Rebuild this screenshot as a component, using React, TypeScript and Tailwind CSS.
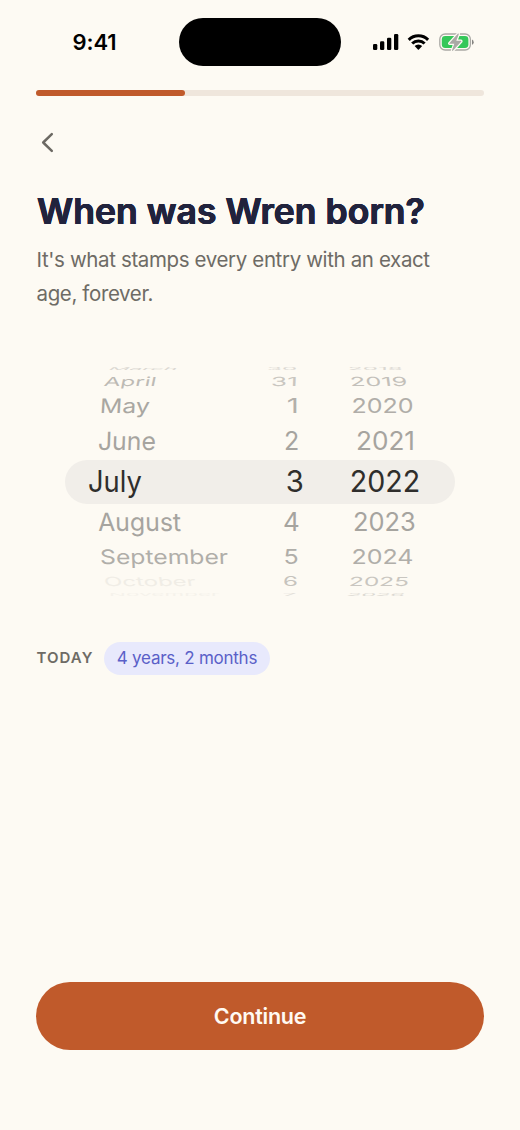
import { useLayoutEffect, useRef, useState } from "react";

type Entry = { text: string; left: number; width: number; tone: string; skew?: number };
type Row = { height: number; size: number; squash: number; cells: [Entry, Entry, Entry] };

const e = (text: string, left: number, width: number, tone: string, skew = 0): Entry => ({ text, left, width, tone, skew });

const rows: Row[] = [
  { height: 10, size: 25, squash: 0.15, cells: [e("March", 110, 67, "text-[#dbd8d2]", -12), e("30", 268, 28, "text-[#dbd8d2]"), e("2018", 349, 53, "text-[#dbd8d2]")] },
  { height: 16, size: 25, squash: 0.5, cells: [e("April", 104.5, 50, "text-[#bdbab5]", -6), e("31", 272, 25, "text-[#c9c6c0]", -1), e("2019", 351, 55.5, "text-[#c3c0ba]", 4)] },
  { height: 33, size: 25, squash: 0.8, cells: [e("May", 101, 47.5, "text-[#a9a7a2]", -3), e("1", 287.5, 9.5, "text-[#b3b0ab]"), e("2020", 352.5, 60, "text-[#b0ada8]")] },
  { height: 37, size: 25, squash: 1, cells: [e("June", 98.5, 55.5, "text-[#a6a49f]", -2), e("2", 285, 13, "text-[#a6a49f]"), e("2021", 356.5, 56.5, "text-[#a6a49f]")] },
  { height: 44, size: 29.5, squash: 1, cells: [e("July", 89, 51.5, "text-[#2f2e2c]"), e("3", 286.5, 15.5, "text-[#2f2e2c]"), e("2022", 350.5, 68.5, "text-[#2f2e2c]")] },
  { height: 37, size: 25, squash: 1, cells: [e("August", 99, 81.5, "text-[#a6a49f]", 1), e("4", 284, 14.5, "text-[#a6a49f]"), e("2023", 354, 61, "text-[#a6a49f]")] },
  { height: 33, size: 25, squash: 0.8, cells: [e("September", 101, 126.5, "text-[#b0aea9]", 2), e("5", 284.5, 13, "text-[#b0aea9]"), e("2024", 352.5, 60, "text-[#b0aea9]")] },
  { height: 16, size: 25, squash: 0.5, cells: [e("October", 105, 90, "text-[#f0ede6]", 5), e("6", 283.5, 13.5, "text-[#c6c3bd]"), e("2025", 350, 57.5, "text-[#c9c6c0]", -3)] },
  { height: 10, size: 25, squash: 0.15, cells: [e("November", 110, 109, "text-[#f5f2eb]"), e("7", 283.5, 12, "text-[#e3e0d9]"), e("2026", 348, 56, "text-[#dbd8d1]", -8)] },
];

const columnStarts = [65, 245, 335];

function WheelText({ entry, row, start }: { entry: Entry; row: Row; start: number }) {
  const ref = useRef<HTMLSpanElement>(null);
  const [stretch, setStretch] = useState(1);
  const bearing = row.size * 0.04;
  useLayoutEffect(() => {
    if (ref.current) setStretch(entry.width / (ref.current.offsetWidth - bearing * 2));
  }, [entry.width, bearing]);
  return (
    <div className="flex h-full min-h-0 min-w-0 items-center" style={{ paddingLeft: entry.left - start }}>
      <span
        ref={ref}
        className={`inline-block origin-left whitespace-nowrap font-normal leading-none ${entry.tone}`}
        style={{
          fontSize: row.size,
          transform: `translate(${-bearing * stretch}px, -0.5px) scale(${stretch}, ${row.squash}) skewX(${entry.skew ?? 0}deg)`,
        }}
      >
        {entry.text}
      </span>
    </div>
  );
}

function StatusBar() {
  return (
    <header className="flex h-[66px] items-start pt-[18px]">
      <div className="flex h-12 w-[179px] items-center pl-[72.5px] text-[22px] font-semibold tracking-[-0.1px] text-black">9:41</div>
      <div className="h-12 w-[162px] rounded-full bg-black" />
      <svg className="ml-[32px] mt-[16px]" width="26" height="17" viewBox="0 0 26 17">
        <rect x="0" y="10" width="4.3" height="6" rx="1.3" />
        <rect x="7" y="7.2" width="4.3" height="8.8" rx="1.3" />
        <rect x="14" y="3.8" width="4.3" height="12.2" rx="1.3" />
        <rect x="21" y="0" width="4.3" height="16" rx="1.3" />
      </svg>
      <svg className="ml-[8px] mt-[16px]" width="23" height="17" viewBox="0 0 23 17">
        <g fill="none" stroke="#000" strokeWidth="3">
          <path d="M1.7 5.9 A13.7 13.7 0 0 1 21.1 5.9" />
          <path d="M5.2 9.5 A8.7 8.7 0 0 1 17.6 9.5" />
        </g>
        <path d="M7.6 12 A5.4 5.4 0 0 1 15.2 12 L11.9 15.4 Q11.4 15.9 10.9 15.4 Z" />
      </svg>
      <svg className="ml-[9px] mt-[15px]" width="37" height="19" viewBox="0 0 37 19">
        <rect x="0.8" y="1" width="30.6" height="16" rx="5.3" fill="none" stroke="#aaa9a5" strokeWidth="1.3" />
        <rect x="2.8" y="3" width="26.6" height="12" rx="3.4" fill="#34c759" />
        <path d="M33 6.6 Q34.7 7.2 34.7 9.2 Q34.7 11.2 33 11.8 Z" fill="#858481" />
        <path d="M19 0.5 L10.3 10.2 Q10 10.8 10.7 10.8 L15.3 10.8 L13 17.3 Q13.1 18.4 14.1 17.6 L22.3 8.6 Q22.6 7.8 21.9 7.8 L17.3 7.8 L19.8 1.2 Q19.9 0.2 19 0.5 Z" fill="#aaa9a5" stroke="#fdfaf3" strokeWidth="2.4" paintOrder="stroke" />
      </svg>
    </header>
  );
}

export default function App() {
  return (
    <div className="flex h-[1130px] w-[520px] flex-col overflow-hidden bg-[#fdfaf3] font-['Inter','Liberation_Sans',sans-serif]">
      <StatusBar />
      <div className="mx-9 mt-6 h-[6px] shrink-0 rounded-full bg-[#efe6dc]">
        <div className="h-full w-[149px] rounded-full bg-[#c05a2b]" />
      </div>
      <button aria-label="Back" className="ml-[41px] mt-[36px] h-[21px] w-[13px]">
        <svg width="13" height="21" viewBox="0 0 13 21" fill="none" stroke="#6c6963" strokeWidth="2.5" strokeLinecap="round" strokeLinejoin="round">
          <path d="M10.8 2.2 L2.2 10.5 L10.8 18.8" />
        </svg>
      </button>
      <h1 className="ml-[37px] mt-[36px] h-[46px] whitespace-nowrap text-[35.5px] font-semibold leading-[45px] tracking-[0.03px] text-[#21233d] [text-shadow:0.5px_0_0_#21233d,-0.5px_0_0_#21233d,0_0.4px_0_#21233d,0_-0.4px_0_#21233d]">When was Wren born?</h1>
      <p className="ml-[36.5px] mt-[7.5px] w-[420px] text-[20.5px] leading-[34px] tracking-[-0.37px] text-[#6e6b65]">
        It's what stamps every entry with an exact
        <br />
        age, forever.
      </p>
      <section className="mx-[65px] mt-[53.5px] flex w-[390px] flex-col">
        {rows.map((row, index) => (
          <div
            key={index}
            className={`grid grid-cols-[180px_90px_120px] grid-rows-[minmax(0,1fr)] ${index === 4 ? "rounded-full bg-[#f1eee9]" : ""}`}
            style={{ height: row.height }}
          >
            {row.cells.map((entry, column) => (
              <WheelText key={entry.text} entry={entry} row={row} start={columnStarts[column]} />
            ))}
          </div>
        ))}
      </section>
      <div className="ml-[36.5px] mt-[42px] flex h-[33px] items-center gap-[10px]">
        <span className="w-[57.5px] text-[15px] font-semibold tracking-[1.05px] text-[#6e6b65]">TODAY</span>
        <span className="flex h-[33px] w-[166px] items-center justify-center whitespace-nowrap rounded-full bg-[#e8e9fc] text-[17px] tracking-[-0.25px] text-[#5a60c8]">4 years, 2 months</span>
      </div>
      <button className="mx-9 mb-20 mt-auto flex h-[68px] shrink-0 items-center justify-center rounded-[34px] bg-[#c05a2b] text-[21.5px] font-semibold tracking-[-0.25px] text-[#fffaf3]">Continue</button>
    </div>
  );
}
